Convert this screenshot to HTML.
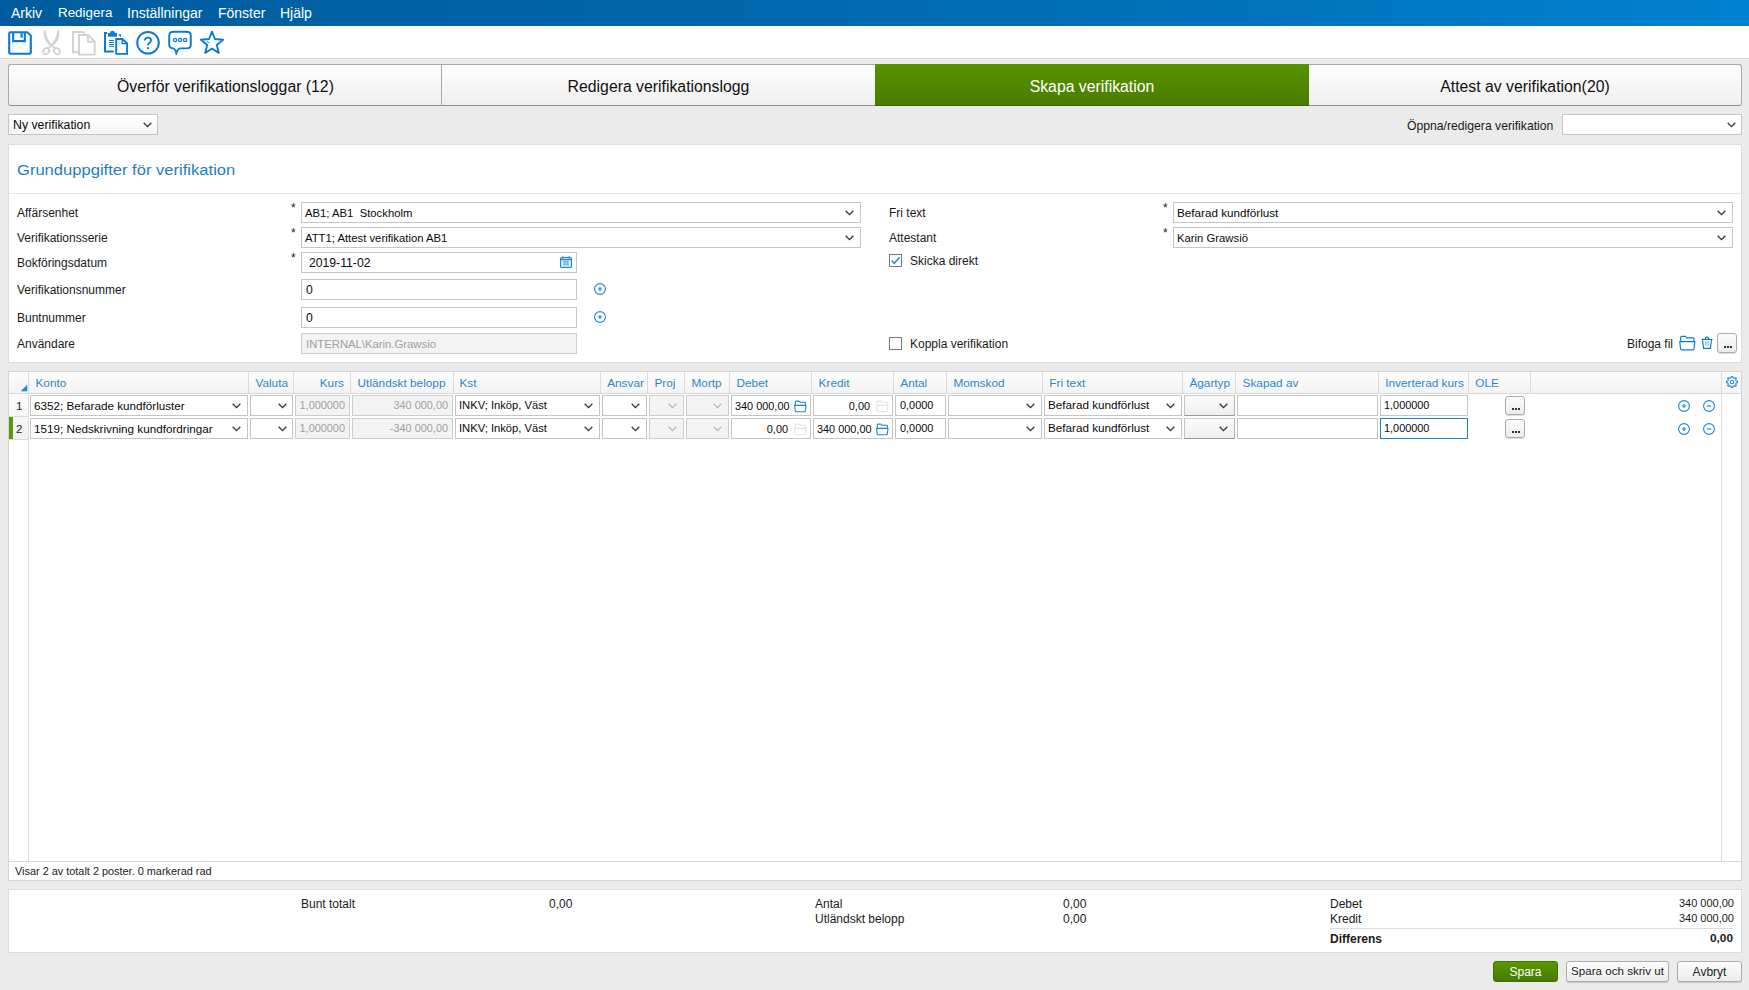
<!DOCTYPE html>
<html><head><meta charset="utf-8">
<style>
*{box-sizing:border-box;margin:0;padding:0}
html,body{width:1749px;height:990px;overflow:hidden;background:#ebebeb;font-family:"Liberation Sans",sans-serif;color:#222}
.a{position:absolute}
.t{position:absolute;white-space:pre;line-height:1}
#menu{left:0;top:0;width:1749px;height:26px;background:linear-gradient(90deg,#005c9f 0%,#0066aa 40%,#0072bb 70%,#0082d0 100%)}
#menu .t{color:#fff;font-size:14px;top:6px}
#tool{left:0;top:26px;width:1749px;height:32px;background:#fff}
#tline{left:0;top:58px;width:1749px;height:1px;background:#d2d2d2}
#tline2{left:0;top:59px;width:1749px;height:1px;background:#f8f8f8}
.tab{position:absolute;top:64px;height:42px;border:1px solid #a9a9a9;border-bottom-color:#8f8f8f;background:linear-gradient(#fefefe,#efefef);font-size:15.8px;color:#111;text-align:center;line-height:44px}
.inp{position:absolute;height:21px;border:1px solid #c5c5c5;background:#fff;font-size:11.3px;color:#0a0a0a;line-height:19px;padding-top:1px;padding-left:3px;white-space:pre;overflow:hidden}
.g{padding-top:0}
.dis{background:#f3f3f3;color:#a0a0a0;border-color:#cdcdcd}
.lbl{position:absolute;font-size:12px;color:#1a1a1a;white-space:pre;line-height:1}
.panel{position:absolute;background:#fff;border:1px solid #d6dee6}
.chev{position:absolute;width:9px;height:6px}
.hdr{position:absolute;font-size:11.8px;color:#2b86cf;white-space:pre;line-height:1;top:378px}
.btn{border:1px solid #acacac;border-radius:3px;background:linear-gradient(#fdfdfd,#ececec);box-shadow:0 1px 1px rgba(0,0,0,0.15)}
.vd{position:absolute;width:1px;background:#dcdcdc}
</style></head><body>
<div id="menu" class="a">
 <span class="t" style="left:11px">Arkiv</span>
 <span class="t" style="left:58px;font-size:13.4px;top:6px">Redigera</span>
 <span class="t" style="left:127px">Inställningar</span>
 <span class="t" style="left:218px">Fönster</span>
 <span class="t" style="left:280px">Hjälp</span>
</div>
<div id="tool" class="a"></div>
<div id="tline" class="a"></div>
<div id="tline2" class="a"></div>


<!-- toolbar icons -->
<svg class="a" style="left:8px;top:31px" width="24" height="24" viewBox="0 0 24 24" fill="none" stroke="#0a7bd5" stroke-width="2.1">
 <path d="M2.5 1.2 H19.4 L22.8 4.6 V21.6 Q22.8 22.8 21.6 22.8 H2.4 Q1.2 22.8 1.2 21.6 V2.4 Q1.2 1.2 2.5 1.2 Z"/>
 <path d="M5.2 1.2 V10.1 H16.8 V1.2"/>
 <rect x="12.3" y="2.1" width="2.6" height="4.6" fill="#0a7bd5" stroke="none" opacity="0.85"/>
</svg>
<svg class="a" style="left:36px;top:28px" width="30" height="30" viewBox="0 0 30 30" fill="none" stroke="#d0d0d0" stroke-linecap="round">
 <path d="M8 3 C7.6 10 10 14.6 15.1 18.1 L16.2 17 C12.4 13.6 9.9 9.4 9.3 3 Z" fill="#d0d0d0" stroke-width="0.6"/>
 <path d="M23 3 C23.4 10 21 14.6 15.9 18.1 L14.8 17 C18.6 13.6 21.1 9.4 21.7 3 Z" fill="#d0d0d0" stroke-width="0.6"/>
 <path d="M15.5 17.6 L12.4 19.8 M15.5 17.6 L18.6 19.8" stroke-width="1.5"/>
 <ellipse cx="10.2" cy="23.1" rx="2.7" ry="3.3" transform="rotate(40 10.2 23.1)" stroke-width="1.6"/>
 <ellipse cx="20.8" cy="23.1" rx="2.7" ry="3.3" transform="rotate(-40 20.8 23.1)" stroke-width="1.6"/>
</svg>
<svg class="a" style="left:72px;top:31px" width="24" height="25" viewBox="0 0 24 25" fill="none" stroke="#d2d2d2" stroke-width="1.9">
 <path d="M6.5 21.2 H1 V1 H10.5 L13 3.5"/>
 <path d="M7 4 H16.2 L22.7 10.5 V23.6 H7 Z"/>
 <path d="M16 4 V10.8 H22.7"/>
</svg>
<svg class="a" style="left:104px;top:30px" width="25" height="26" viewBox="0 0 25 26" fill="none" stroke="#0a7bd5">
 <path d="M3.2 2.9 H1 V21.6 H9.8" stroke-width="2"/>
 <rect x="4" y="2.9" width="9" height="3.8" fill="#0a7bd5" stroke="none"/>
 <path d="M6.2 3 A2.3 2.3 0 0 1 10.8 3 Z" fill="#0a7bd5" stroke="none"/>
 <path d="M14.3 4.3 H17 V6.8 H16 Z" fill="#0a7bd5" stroke="none"/>
 <path d="M5 10.5 H10 M5 12.5 H10 M5 14.5 H10 M5 16.3 H10" stroke-width="1"/>
 <path d="M12.2 9 H18.5 L23.1 13.4 V23.9 H12.2 Z" stroke-width="1.9"/>
 <path d="M18.3 9 V13.6 H23.1" stroke-width="1.5"/>
</svg>
<svg class="a" style="left:136px;top:31px" width="24" height="24" viewBox="0 0 24 24" fill="none" stroke="#0a7bd5" stroke-width="2">
 <circle cx="12" cy="11.8" r="10.8"/>
 <path d="M8.9 9.6 Q8.9 6.6 12 6.6 Q15.1 6.6 15.1 9.3 Q15.1 11 13.2 12.1 Q12 12.9 12 14.2 V14.6" stroke-width="1.8"/>
 <rect x="11" y="16.2" width="2" height="1.9" fill="#0a7bd5" stroke="none"/>
</svg>
<svg class="a" style="left:168px;top:30px" width="24" height="25" viewBox="0 0 24 25" fill="none" stroke="#0a7bd5" stroke-width="1.9">
 <path d="M5.2 1.8 H18.6 Q22.8 1.8 22.8 5.8 V14.6 Q22.8 18.4 19 18.4 H12 Q9.8 18.8 8.3 23.3 Q7.4 18.8 5 18.4 Q1.2 17.8 1.2 14.4 V5.8 Q1.2 1.8 5.2 1.8 Z"/>
 <circle cx="7.1" cy="10" r="1.6" stroke-width="1.3"/>
 <circle cx="12.1" cy="10" r="1.6" stroke-width="1.3"/>
 <circle cx="17.1" cy="10" r="1.6" stroke-width="1.3"/>
</svg>
<svg class="a" style="left:200px;top:30px" width="25" height="25" viewBox="0 0 25 25" fill="none" stroke="#0a7bd5" stroke-width="1.9" stroke-linejoin="round">
 <path d="M12 1.7 L15 9 L23.2 9.7 L16.8 14.9 L18.7 23 L12 18.5 L5.3 23 L7.2 14.9 L0.8 9.7 L9 9 Z"/>
 <path d="M6.6 11.3 L9.8 13.2" stroke-width="0.9"/>
</svg>

<!-- tabs -->
<div class="tab" style="left:8px;width:434px;border-radius:3px 0 0 3px;border-right:none">Överför verifikationsloggar (12)</div>
<div class="tab" style="left:441px;width:434px;border-right:none">Redigera verifikationslogg</div>
<div class="tab" style="left:875px;width:434px;border:none;border-bottom:1px solid #3d6b00;background:linear-gradient(#579300,#4a7c00);color:#fff;line-height:46px">Skapa verifikation</div>
<div class="tab" style="left:1309px;width:433px;border-left:none;border-radius:0 3px 3px 0">Attest av verifikation(20)</div>


<!-- row below tabs -->
<div class="inp" style="left:8px;top:114px;width:150px;background:linear-gradient(#fff,#f4f4f4);border-color:#c4c4c4;font-size:12.3px;padding-left:4px">Ny verifikation</div>
<svg class="chev" style="left:143px;top:122px" viewBox="0 0 9 6"><path d="M0.7 0.8 L4.5 4.6 L8.3 0.8" fill="none" stroke="#333" stroke-width="1.3"/></svg>
<span class="lbl" style="left:1407px;top:120px;font-size:12.2px">Öppna/redigera verifikation</span>
<div class="inp" style="left:1562px;top:114px;width:180px"></div>
<svg class="chev" style="left:1727px;top:122px" viewBox="0 0 9 6"><path d="M0.7 0.8 L4.5 4.6 L8.3 0.8" fill="none" stroke="#333" stroke-width="1.3"/></svg>

<!-- panel 1 -->
<div class="panel" style="left:8px;top:144px;width:1734px;height:219px"></div>
<span class="t" style="left:17px;top:162px;font-size:15.3px;color:#1f7dc4;transform:scaleX(1.083);transform-origin:0 0">Grunduppgifter för verifikation</span>
<div class="a" style="left:9px;top:193px;width:1732px;height:1px;background:#e4e8ec"></div>

<span class="lbl" style="left:17px;top:207px">Affärsenhet</span>
<span class="lbl" style="left:17px;top:232px">Verifikationsserie</span>
<span class="lbl" style="left:17px;top:257px">Bokföringsdatum</span>
<span class="lbl" style="left:17px;top:284px">Verifikationsnummer</span>
<span class="lbl" style="left:17px;top:312px">Buntnummer</span>
<span class="lbl" style="left:17px;top:338px">Användare</span>

<span class="lbl" style="left:291px;top:202px">*</span>
<span class="lbl" style="left:291px;top:227px">*</span>
<span class="lbl" style="left:291px;top:252px">*</span>

<div class="inp" style="left:301px;top:202px;width:560px">AB1; AB1  Stockholm</div>
<svg class="chev" style="left:845px;top:210px" viewBox="0 0 9 6"><path d="M0.7 0.8 L4.5 4.6 L8.3 0.8" fill="none" stroke="#333" stroke-width="1.3"/></svg>
<div class="inp" style="left:301px;top:227px;width:560px">ATT1; Attest verifikation AB1</div>
<svg class="chev" style="left:845px;top:235px" viewBox="0 0 9 6"><path d="M0.7 0.8 L4.5 4.6 L8.3 0.8" fill="none" stroke="#333" stroke-width="1.3"/></svg>
<div class="inp" style="left:301px;top:252px;width:276px;padding-left:7px;font-size:12.2px">2019-11-02</div>
<div class="inp" style="left:301px;top:279px;width:276px;padding-left:4px;font-size:12.2px">0</div>
<div class="inp" style="left:301px;top:307px;width:276px;padding-left:4px;font-size:12.2px">0</div>
<div class="inp dis" style="left:301px;top:333px;width:276px;padding-left:4px">INTERNAL\Karin.Grawsio</div>

<span class="lbl" style="left:889px;top:207px">Fri text</span>
<span class="lbl" style="left:889px;top:232px">Attestant</span>
<span class="lbl" style="left:1163px;top:202px">*</span>
<span class="lbl" style="left:1163px;top:227px">*</span>
<div class="inp" style="left:1173px;top:202px;width:560px;font-size:11.7px;padding-top:0">Befarad kundförlust</div>
<svg class="chev" style="left:1717px;top:210px" viewBox="0 0 9 6"><path d="M0.7 0.8 L4.5 4.6 L8.3 0.8" fill="none" stroke="#333" stroke-width="1.3"/></svg>
<div class="inp" style="left:1173px;top:227px;width:560px">Karin Grawsiö</div>
<svg class="chev" style="left:1717px;top:235px" viewBox="0 0 9 6"><path d="M0.7 0.8 L4.5 4.6 L8.3 0.8" fill="none" stroke="#333" stroke-width="1.3"/></svg>

<div class="a" style="left:889px;top:254px;width:13px;height:13px;border:1px solid #7a7a7a;background:#fff"></div>
<svg class="a" style="left:889px;top:254px" width="13" height="13" viewBox="0 0 13 13"><path d="M2.6 6.6 L5.2 9.4 L10.6 3.2" fill="none" stroke="#1a86e0" stroke-width="1.5"/></svg>
<span class="lbl" style="left:910px;top:255px">Skicka direkt</span>
<div class="a" style="left:889px;top:337px;width:13px;height:13px;border:1px solid #7a7a7a;background:#fff"></div>
<span class="lbl" style="left:910px;top:338px">Koppla verifikation</span>
<span class="lbl" style="left:1627px;top:338px">Bifoga fil</span>
<svg class="a" style="left:560px;top:256px" width="12" height="12" viewBox="0 0 12 12" fill="none" stroke="#1a86d8">
 <rect x="0.6" y="1.6" width="10.8" height="9.8" rx="1" stroke-width="1.2"/>
 <path d="M0.6 3.6 H11.4" stroke-width="1.2"/>
 <path d="M2.8 0.2 V2.4 M9.2 0.2 V2.4" stroke-width="1.1"/>
 <path d="M2.5 5.2 H9.5 M2.5 7 H9.5 M2.5 8.8 H9.5 M4.2 4.8 V9.6 M6 4.8 V9.6 M7.8 4.8 V9.6" stroke-width="0.7" opacity="0.8"/>
</svg>
<svg class="a" style="left:594px;top:283px" width="12" height="12" viewBox="0 0 12 12"><circle cx="6" cy="6" r="5.4" fill="none" stroke="#1a86d8" stroke-width="1.1"/><path d="M3.9 6 H8.1 M6 3.9 V8.1" stroke="#1a86d8" stroke-width="1.2"/></svg><svg class="a" style="left:594px;top:311px" width="12" height="12" viewBox="0 0 12 12"><circle cx="6" cy="6" r="5.4" fill="none" stroke="#1a86d8" stroke-width="1.1"/><path d="M3.9 6 H8.1 M6 3.9 V8.1" stroke="#1a86d8" stroke-width="1.2"/></svg>
<svg class="a" style="left:1679px;top:335px" width="17" height="16" viewBox="0 0 17 16" fill="none" stroke="#0a7bd5" stroke-width="1.15" stroke-linejoin="round">
 <path d="M1.7 6.2 V2.3 Q1.7 1.3 2.7 1.3 H5.8 Q6.6 1.3 7.1 2 L7.7 2.8 H14 Q15 2.8 15 3.8 V6.2"/>
 <path d="M0.7 6.6 H15.9 L15 14 Q14.9 14.8 14 14.8 H2.6 Q1.7 14.8 1.6 14 Z"/>
</svg>
<svg class="a" style="left:1701px;top:336px" width="12" height="13" viewBox="0 0 12 13" fill="none" stroke="#0a7bd5" stroke-width="1.15" stroke-linejoin="round">
 <path d="M0.5 3.4 H11.5"/>
 <path d="M4.3 3.3 Q4.3 1.1 6 1.1 Q7.7 1.1 7.7 3.3"/>
 <path d="M1.5 4.2 L2.6 12.3 H9.4 L10.5 4.2"/>
 <path d="M4.6 5.2 V9.6 M6 5.2 V9.6 M7.4 5.2 V9.6" stroke-width="0.8" opacity="0.6"/>
</svg>
<div class="a btn" style="left:1717px;top:333px;width:20px;height:20px"></div><div class="a" style="left:1724px;top:346px;width:2px;height:2px;background:#3a2a40"></div><div class="a" style="left:1727px;top:346px;width:2px;height:2px;background:#3a2a40"></div><div class="a" style="left:1730px;top:346px;width:2px;height:2px;background:#3a2a40"></div>



<!-- grid -->
<div class="a" style="left:8px;top:371px;width:1734px;height:510px;background:#fff;border:1px solid #d4d4d4"></div>
<div class="a" style="left:9px;top:372px;width:1732px;height:21px;background:linear-gradient(#fdfdfd,#f3f3f3)"></div>
<div class="a" style="left:9px;top:393px;width:1732px;height:1px;background:#d9d9d9"></div>
<div class="a" style="left:9px;top:394px;width:19px;height:45px;background:linear-gradient(#fcfcfc,#f0f0f0)"></div>
<div class="a" style="left:9px;top:416px;width:19px;height:1px;background:#dcdcdc"></div>
<div class="a" style="left:9px;top:439px;width:19px;height:1px;background:#dcdcdc"></div>
<div class="a" style="left:9px;top:417px;width:4px;height:22px;background:#5a9a0a"></div>
<div class="vd" style="left:28px;top:372px;height:489px"></div>
<div class="vd" style="left:248px;top:372px;height:21px"></div>
<div class="vd" style="left:293px;top:372px;height:21px"></div>
<div class="vd" style="left:350px;top:372px;height:21px"></div>
<div class="vd" style="left:453px;top:372px;height:21px"></div>
<div class="vd" style="left:600px;top:372px;height:21px"></div>
<div class="vd" style="left:647px;top:372px;height:21px"></div>
<div class="vd" style="left:684px;top:372px;height:21px"></div>
<div class="vd" style="left:729px;top:372px;height:21px"></div>
<div class="vd" style="left:811px;top:372px;height:21px"></div>
<div class="vd" style="left:893px;top:372px;height:21px"></div>
<div class="vd" style="left:946px;top:372px;height:21px"></div>
<div class="vd" style="left:1042px;top:372px;height:21px"></div>
<div class="vd" style="left:1182px;top:372px;height:21px"></div>
<div class="vd" style="left:1235px;top:372px;height:21px"></div>
<div class="vd" style="left:1378px;top:372px;height:21px"></div>
<div class="vd" style="left:1468px;top:372px;height:21px"></div>
<div class="vd" style="left:1530px;top:372px;height:21px"></div>
<div class="vd" style="left:1721px;top:372px;height:489px"></div>
<div class="a" style="left:9px;top:861px;width:1732px;height:1px;background:#d4d4d4"></div>
<span class="t" style="left:15px;top:866px;font-size:10.9px;color:#222">Visar 2 av totalt 2 poster. 0 markerad rad</span>
<svg class="a" style="left:20px;top:384px" width="8" height="8" viewBox="0 0 8 8"><path d="M7.2 0.8 V7.2 H0.8 Z" fill="#1a86d8"/></svg>
<span class="hdr" style="left:35.5px">Konto</span>
<span class="hdr" style="left:255.4px">Valuta</span>
<span class="hdr" style="left:357.6px">Utländskt belopp</span>
<span class="hdr" style="left:459.5px">Kst</span>
<span class="hdr" style="left:607.2px">Ansvar</span>
<span class="hdr" style="left:654.5px">Proj</span>
<span class="hdr" style="left:691.5px">Mortp</span>
<span class="hdr" style="left:736.5px">Debet</span>
<span class="hdr" style="left:818.6px">Kredit</span>
<span class="hdr" style="left:900.3px">Antal</span>
<span class="hdr" style="left:953.4px">Momskod</span>
<span class="hdr" style="left:1049.3px">Fri text</span>
<span class="hdr" style="left:1189.4px">Ägartyp</span>
<span class="hdr" style="left:1242.6px">Skapad av</span>
<span class="hdr" style="left:1385.2px">Inverterad kurs</span>
<span class="hdr" style="left:1475.3px">OLE</span>
<span class="hdr" style="left:293px;width:51px;text-align:right">Kurs</span>
<svg class="a" style="left:1726px;top:376px" width="12" height="12" viewBox="0 0 12 12" fill="none" stroke="#1a86d8" stroke-width="1.05"><path d="M6.97 1.81 L6.75 0.55 L5.25 0.55 L5.03 1.81 L3.72 2.35 L2.67 1.62 L1.62 2.67 L2.35 3.72 L1.81 5.03 L0.55 5.25 L0.55 6.75 L1.81 6.97 L2.35 8.28 L1.62 9.33 L2.67 10.38 L3.72 9.65 L5.03 10.19 L5.25 11.45 L6.75 11.45 L6.97 10.19 L8.28 9.65 L9.33 10.38 L10.38 9.33 L9.65 8.28 L10.19 6.97 L11.45 6.75 L11.45 5.25 L10.19 5.03 L9.65 3.72 L10.38 2.67 L9.33 1.62 L8.28 2.35 Z" stroke-linejoin="round"/><circle cx="6" cy="6" r="1.7"/></svg>
<span class="t" style="left:16px;top:401px;font-size:11.5px;color:#222">1</span>
<div class="inp g " style="left:30px;top:395px;width:218px;;font-size:11.7px">6352; Befarade kundförluster</div>
<svg class="chev" style="left:232px;top:403px" viewBox="0 0 9 6"><path d="M0.7 0.8 L4.5 4.6 L8.3 0.8" fill="none" stroke="#333" stroke-width="1.3"/></svg>
<div class="inp g " style="left:250px;top:395px;width:43px;"></div>
<svg class="chev" style="left:278px;top:403px" viewBox="0 0 9 6"><path d="M0.7 0.8 L4.5 4.6 L8.3 0.8" fill="none" stroke="#333" stroke-width="1.3"/></svg>
<div class="inp g dis" style="left:295px;top:395px;width:55px;text-align:right;padding-right:4px;font-size:10.9px;padding-top:0">1,000000</div>
<div class="inp g dis" style="left:352px;top:395px;width:101px;text-align:right;padding-right:4px;font-size:10.9px;padding-top:0">340 000,00</div>
<div class="inp g " style="left:455px;top:395px;width:145px;;font-size:11.2px">INKV; Inköp, Väst</div>
<svg class="chev" style="left:584px;top:403px" viewBox="0 0 9 6"><path d="M0.7 0.8 L4.5 4.6 L8.3 0.8" fill="none" stroke="#333" stroke-width="1.3"/></svg>
<div class="inp g " style="left:602px;top:395px;width:45px;"></div>
<svg class="chev" style="left:631px;top:403px" viewBox="0 0 9 6"><path d="M0.7 0.8 L4.5 4.6 L8.3 0.8" fill="none" stroke="#333" stroke-width="1.3"/></svg>
<div class="inp g dis" style="left:649px;top:395px;width:35px;"></div>
<svg class="chev" style="left:668px;top:403px" viewBox="0 0 9 6"><path d="M0.7 0.8 L4.5 4.6 L8.3 0.8" fill="none" stroke="#b8b8b8" stroke-width="1.3"/></svg>
<div class="inp g dis" style="left:686px;top:395px;width:43px;"></div>
<svg class="chev" style="left:713px;top:403px" viewBox="0 0 9 6"><path d="M0.7 0.8 L4.5 4.6 L8.3 0.8" fill="none" stroke="#b8b8b8" stroke-width="1.3"/></svg>
<div class="inp g " style="left:731px;top:395px;width:80px;text-align:right;padding-right:22px;font-size:10.9px;padding-top:1px">340 000,00</div>
<div class="inp g " style="left:813px;top:395px;width:80px;text-align:right;padding-right:22px;font-size:10.9px;padding-top:1px">0,00</div>
<svg class="a" style="left:794px;top:400px" width="13" height="13" viewBox="0 0 13 13" fill="none" stroke="#1a86d8" stroke-width="1.1" stroke-linejoin="round"><path d="M1.3 5 V1.9 Q1.3 1.1 2.1 1.1 H4.6 Q5.2 1.1 5.6 1.6 L6.1 2.3 H10.6 Q11.4 2.3 11.4 3.1 V5"/><path d="M0.6 5.4 H12 L11.3 11.2 Q11.2 11.8 10.5 11.8 H2.1 Q1.4 11.8 1.3 11.2 Z"/></svg>
<svg class="a" style="left:876px;top:400px" width="13" height="13" viewBox="0 0 13 13" fill="none" stroke="#e4e4e4" stroke-width="1.1" stroke-linejoin="round"><path d="M1.3 5 V1.9 Q1.3 1.1 2.1 1.1 H4.6 Q5.2 1.1 5.6 1.6 L6.1 2.3 H10.6 Q11.4 2.3 11.4 3.1 V5"/><path d="M0.6 5.4 H12 L11.3 11.2 Q11.2 11.8 10.5 11.8 H2.1 Q1.4 11.8 1.3 11.2 Z"/></svg>
<div class="inp g " style="left:895px;top:395px;width:51px;padding-left:4px;font-size:10.9px;padding-top:0">0,0000</div>
<div class="inp g " style="left:948px;top:395px;width:94px;"></div>
<svg class="chev" style="left:1026px;top:403px" viewBox="0 0 9 6"><path d="M0.7 0.8 L4.5 4.6 L8.3 0.8" fill="none" stroke="#333" stroke-width="1.3"/></svg>
<div class="inp g " style="left:1044px;top:395px;width:138px;;font-size:11.7px;line-height:17px">Befarad kundförlust</div>
<svg class="chev" style="left:1166px;top:403px" viewBox="0 0 9 6"><path d="M0.7 0.8 L4.5 4.6 L8.3 0.8" fill="none" stroke="#333" stroke-width="1.3"/></svg>
<div class="inp g " style="left:1184px;top:395px;width:51px;background:linear-gradient(#fcfcfc,#eeeeee);border-color:#cdcdcd #b4b4b4 #9a9a9a #c4c4c4"></div>
<svg class="chev" style="left:1219px;top:403px" viewBox="0 0 9 6"><path d="M0.7 0.8 L4.5 4.6 L8.3 0.8" fill="none" stroke="#333" stroke-width="1.3"/></svg>
<div class="inp g " style="left:1237px;top:395px;width:141px;"></div>
<div class="inp g " style="left:1380px;top:395px;width:88px;;font-size:10.9px;padding-top:0">1,000000</div>
<div class="a btn" style="left:1505px;top:396px;width:20px;height:19px"></div>
<div class="a" style="left:1512px;top:408px;width:2px;height:2px;background:#3a2a40"></div><div class="a" style="left:1515px;top:408px;width:2px;height:2px;background:#3a2a40"></div><div class="a" style="left:1518px;top:408px;width:2px;height:2px;background:#3a2a40"></div>
<svg class="a" style="left:1678px;top:400px" width="12" height="12" viewBox="0 0 12 12"><circle cx="6" cy="6" r="5.4" fill="none" stroke="#1a86d8" stroke-width="1.1"/><path d="M3.9 6 H8.1 M6 3.9 V8.1" stroke="#1a86d8" stroke-width="1.2"/></svg>
<svg class="a" style="left:1703px;top:400px" width="12" height="12" viewBox="0 0 12 12"><circle cx="6" cy="6" r="5.4" fill="none" stroke="#1a86d8" stroke-width="1.1"/><path d="M3.8 6 H8.2" stroke="#1a86d8" stroke-width="1.2"/></svg>
<span class="t" style="left:16px;top:424px;font-size:11.5px;color:#222">2</span>
<div class="inp g " style="left:30px;top:418px;width:218px;;font-size:11.7px">1519; Nedskrivning kundfordringar</div>
<svg class="chev" style="left:232px;top:426px" viewBox="0 0 9 6"><path d="M0.7 0.8 L4.5 4.6 L8.3 0.8" fill="none" stroke="#333" stroke-width="1.3"/></svg>
<div class="inp g " style="left:250px;top:418px;width:43px;"></div>
<svg class="chev" style="left:278px;top:426px" viewBox="0 0 9 6"><path d="M0.7 0.8 L4.5 4.6 L8.3 0.8" fill="none" stroke="#333" stroke-width="1.3"/></svg>
<div class="inp g dis" style="left:295px;top:418px;width:55px;text-align:right;padding-right:4px;font-size:10.9px;padding-top:0">1,000000</div>
<div class="inp g dis" style="left:352px;top:418px;width:101px;text-align:right;padding-right:4px;font-size:10.9px;padding-top:0">-340 000,00</div>
<div class="inp g " style="left:455px;top:418px;width:145px;;font-size:11.2px">INKV; Inköp, Väst</div>
<svg class="chev" style="left:584px;top:426px" viewBox="0 0 9 6"><path d="M0.7 0.8 L4.5 4.6 L8.3 0.8" fill="none" stroke="#333" stroke-width="1.3"/></svg>
<div class="inp g " style="left:602px;top:418px;width:45px;"></div>
<svg class="chev" style="left:631px;top:426px" viewBox="0 0 9 6"><path d="M0.7 0.8 L4.5 4.6 L8.3 0.8" fill="none" stroke="#333" stroke-width="1.3"/></svg>
<div class="inp g dis" style="left:649px;top:418px;width:35px;"></div>
<svg class="chev" style="left:668px;top:426px" viewBox="0 0 9 6"><path d="M0.7 0.8 L4.5 4.6 L8.3 0.8" fill="none" stroke="#b8b8b8" stroke-width="1.3"/></svg>
<div class="inp g dis" style="left:686px;top:418px;width:43px;"></div>
<svg class="chev" style="left:713px;top:426px" viewBox="0 0 9 6"><path d="M0.7 0.8 L4.5 4.6 L8.3 0.8" fill="none" stroke="#b8b8b8" stroke-width="1.3"/></svg>
<div class="inp g " style="left:731px;top:418px;width:80px;text-align:right;padding-right:22px;font-size:10.9px;padding-top:1px">0,00</div>
<div class="inp g " style="left:813px;top:418px;width:80px;text-align:right;padding-right:22px;font-size:10.9px;padding-top:1px">340 000,00</div>
<svg class="a" style="left:794px;top:423px" width="13" height="13" viewBox="0 0 13 13" fill="none" stroke="#e4e4e4" stroke-width="1.1" stroke-linejoin="round"><path d="M1.3 5 V1.9 Q1.3 1.1 2.1 1.1 H4.6 Q5.2 1.1 5.6 1.6 L6.1 2.3 H10.6 Q11.4 2.3 11.4 3.1 V5"/><path d="M0.6 5.4 H12 L11.3 11.2 Q11.2 11.8 10.5 11.8 H2.1 Q1.4 11.8 1.3 11.2 Z"/></svg>
<svg class="a" style="left:876px;top:423px" width="13" height="13" viewBox="0 0 13 13" fill="none" stroke="#1a86d8" stroke-width="1.1" stroke-linejoin="round"><path d="M1.3 5 V1.9 Q1.3 1.1 2.1 1.1 H4.6 Q5.2 1.1 5.6 1.6 L6.1 2.3 H10.6 Q11.4 2.3 11.4 3.1 V5"/><path d="M0.6 5.4 H12 L11.3 11.2 Q11.2 11.8 10.5 11.8 H2.1 Q1.4 11.8 1.3 11.2 Z"/></svg>
<div class="inp g " style="left:895px;top:418px;width:51px;padding-left:4px;font-size:10.9px;padding-top:0">0,0000</div>
<div class="inp g " style="left:948px;top:418px;width:94px;"></div>
<svg class="chev" style="left:1026px;top:426px" viewBox="0 0 9 6"><path d="M0.7 0.8 L4.5 4.6 L8.3 0.8" fill="none" stroke="#333" stroke-width="1.3"/></svg>
<div class="inp g " style="left:1044px;top:418px;width:138px;;font-size:11.7px;line-height:17px">Befarad kundförlust</div>
<svg class="chev" style="left:1166px;top:426px" viewBox="0 0 9 6"><path d="M0.7 0.8 L4.5 4.6 L8.3 0.8" fill="none" stroke="#333" stroke-width="1.3"/></svg>
<div class="inp g " style="left:1184px;top:418px;width:51px;background:linear-gradient(#fcfcfc,#eeeeee);border-color:#cdcdcd #b4b4b4 #9a9a9a #c4c4c4"></div>
<svg class="chev" style="left:1219px;top:426px" viewBox="0 0 9 6"><path d="M0.7 0.8 L4.5 4.6 L8.3 0.8" fill="none" stroke="#333" stroke-width="1.3"/></svg>
<div class="inp g " style="left:1237px;top:418px;width:141px;"></div>
<div class="inp g " style="left:1380px;top:418px;width:88px;border-color:#1a7fd0;font-size:10.9px;padding-top:0">1,000000</div>
<div class="a btn" style="left:1505px;top:419px;width:20px;height:19px"></div>
<div class="a" style="left:1512px;top:431px;width:2px;height:2px;background:#3a2a40"></div><div class="a" style="left:1515px;top:431px;width:2px;height:2px;background:#3a2a40"></div><div class="a" style="left:1518px;top:431px;width:2px;height:2px;background:#3a2a40"></div>
<svg class="a" style="left:1678px;top:423px" width="12" height="12" viewBox="0 0 12 12"><circle cx="6" cy="6" r="5.4" fill="none" stroke="#1a86d8" stroke-width="1.1"/><path d="M3.9 6 H8.1 M6 3.9 V8.1" stroke="#1a86d8" stroke-width="1.2"/></svg>
<svg class="a" style="left:1703px;top:423px" width="12" height="12" viewBox="0 0 12 12"><circle cx="6" cy="6" r="5.4" fill="none" stroke="#1a86d8" stroke-width="1.1"/><path d="M3.8 6 H8.2" stroke="#1a86d8" stroke-width="1.2"/></svg>

<!-- summary -->
<div class="panel" style="left:8px;top:889px;width:1734px;height:64px"></div>
<span class="lbl" style="left:301px;top:898px">Bunt totalt</span>
<span class="lbl" style="left:549px;top:898px">0,00</span>
<span class="lbl" style="left:815px;top:898px">Antal</span>
<span class="lbl" style="left:815px;top:913px">Utländskt belopp</span>
<span class="lbl" style="left:1063px;top:898px">0,00</span>
<span class="lbl" style="left:1063px;top:913px">0,00</span>
<span class="lbl" style="left:1330px;top:898px">Debet</span>
<span class="lbl" style="left:1330px;top:913px">Kredit</span>
<span class="lbl" style="left:1533px;width:201px;text-align:right;top:898px;font-size:11px">340 000,00</span>
<span class="lbl" style="left:1533px;width:201px;text-align:right;top:913px;font-size:11px">340 000,00</span>
<div class="a" style="left:1330px;top:928px;width:403px;height:1px;background:#d5dde5"></div>
<span class="lbl" style="left:1330px;top:933px;font-weight:bold">Differens</span>
<span class="lbl" style="left:1533px;width:200px;text-align:right;top:933px;font-weight:bold;font-size:11.8px">0,00</span>

<div class="a" style="left:1493px;top:961px;width:65px;height:21px;border:1px solid #3f7300;border-radius:3px;background:linear-gradient(#5a9800,#477a00)"></div>
<span class="t" style="left:1493px;width:65px;text-align:center;top:966px;font-size:12px;color:#fff">Spara</span>
<div class="a btn" style="left:1566px;top:961px;width:103px;height:21px"></div>
<span class="t" style="left:1566px;width:103px;text-align:center;top:965px;font-size:11.6px;color:#222">Spara och skriv ut</span>
<div class="a btn" style="left:1677px;top:961px;width:65px;height:21px"></div>
<span class="t" style="left:1677px;width:65px;text-align:center;top:966px;font-size:12px;color:#222">Avbryt</span>

</body></html>
